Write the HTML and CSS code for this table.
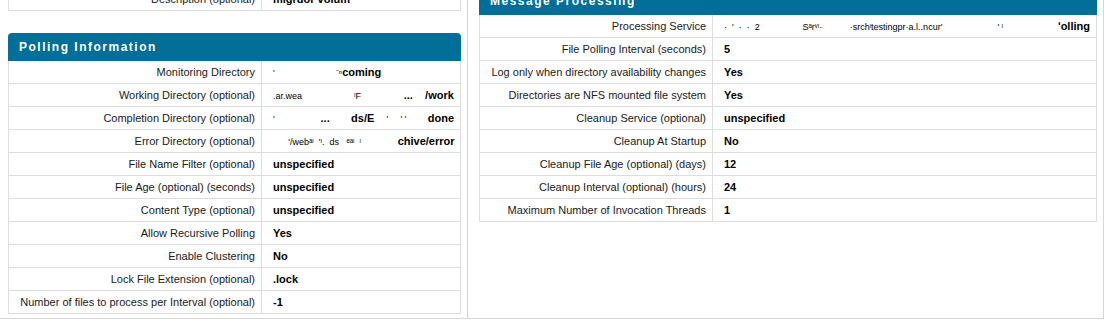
FILE: index.html
```html
<!DOCTYPE html>
<html lang="en">
<head>
<meta charset="UTF-8">
<meta name="viewport" content="width=device-width, initial-scale=1.0">
<title>File Polling Listener</title>
<link rel="stylesheet" href="styles.css">
</head>
<body>
    <div class="page">
        <div class="col col-left">
            <table class="props">
                <tr><td class="label">Description (optional)</td><td class="value">migrdor volum</td></tr>
            </table>

            <div class="section">
                <div class="section-head">Polling Information</div>
                <table class="props">
                    <tr><td class="label">Monitoring Directory</td><td class="value pre"><span class="smudge">'</span>                    <span class="smudge">⁻ⁿ</span>coming</td></tr>
                    <tr><td class="label">Working Directory (optional)</td><td class="value pre"><span class="smudge">.ar.wea</span>                 <span class="smudge">ᶦF</span>              ...    /work</td></tr>
                    <tr><td class="label">Completion Directory (optional)</td><td class="value pre"><span class="smudge">'</span>               ...       ds/E    <span class="smudge">ʹ</span>    <span class="smudge">ʹ ʹ</span>       done</td></tr>
                    <tr><td class="label">Error Directory (optional)</td><td class="value pre">     <span class="smudge">ʹ/webᵃᶦ  ʹᶦ.  ds   ᵉᵃᶦ  ᶦ</span>            chive/error</td></tr>
                    <tr><td class="label">File Name Filter (optional)</td><td class="value">unspecified</td></tr>
                    <tr><td class="label">File Age (optional) (seconds)</td><td class="value">unspecified</td></tr>
                    <tr><td class="label">Content Type (optional)</td><td class="value">unspecified</td></tr>
                    <tr><td class="label">Allow Recursive Polling</td><td class="value">Yes</td></tr>
                    <tr><td class="label">Enable Clustering</td><td class="value">No</td></tr>
                    <tr><td class="label">Lock File Extension (optional)</td><td class="value">.lock</td></tr>
                    <tr><td class="label">Number of files to process per Interval (optional)</td><td class="value">-1</td></tr>
                </table>
            </div>
        </div>

        <div class="col col-right">
            <div class="section">
                <div class="section-head">Message Processing</div>
                <table class="props">
                    <tr><td class="label">Processing Service</td><td class="value pre"><span class="smudge">·  ʹ  ·  ·  2</span>              <span class="smudge">Sᵃrᵛᶦ·</span>         <span class="smudge">·srchᶦtestingpr·a.l..ncurʹ</span>                  <span class="smudge">ʹ ᶦ</span>                  ʹolling</td></tr>
                    <tr><td class="label">File Polling Interval (seconds)</td><td class="value">5</td></tr>
                    <tr><td class="label">Log only when directory availability changes</td><td class="value">Yes</td></tr>
                    <tr><td class="label">Directories are NFS mounted file system</td><td class="value">Yes</td></tr>
                    <tr><td class="label">Cleanup Service (optional)</td><td class="value">unspecified</td></tr>
                    <tr><td class="label">Cleanup At Startup</td><td class="value">No</td></tr>
                    <tr><td class="label">Cleanup File Age (optional) (days)</td><td class="value">12</td></tr>
                    <tr><td class="label">Cleanup Interval (optional) (hours)</td><td class="value">24</td></tr>
                    <tr><td class="label">Maximum Number of Invocation Threads</td><td class="value">1</td></tr>
                </table>
            </div>
        </div>
    </div>
</body>
</html>
```

FILE: styles.css
```css
:root {
    --head-bg: #006e96;
    --cell-line: #dddddd;
    --col-line: #d6d6d6;
    --label-color: #1a1a1a;
}
body {
    margin: 0;
    background: white;
    font-family: "Liberation Sans", Arial, sans-serif;
    font-size: 11px;
}
.page {
    display: grid;
    grid-template-columns: 468px 636px;
    margin-top: -13px;
}
.col {
    box-sizing: border-box;
    height: 332px;
    border-right: 1px solid var(--col-line);
    border-bottom: 1px solid var(--col-line);
}
.col-left {
    padding: 0 6px 0 8px;
}
.col-right {
    padding: 0 6px 0 11px;
}
.col-left .section {
    margin-top: 22px;
}
.section-head {
    height: 28px;
    line-height: 28px;
    padding-left: 11px;
    background: var(--head-bg);
    color: white;
    font-size: 12px;
    font-weight: bold;
    letter-spacing: 1.5px;
    border-radius: 4px 4px 0 0;
}
.props {
    width: 100%;
    border-collapse: collapse;
    table-layout: fixed;
}
.props td {
    height: 22px;
    padding: 0;
    border: 1px solid var(--cell-line);
    vertical-align: middle;
    white-space: nowrap;
    overflow: hidden;
}
.section .props tr:first-child td {
    border-top: none;
}
.label {
    text-align: right;
    padding-right: 6px !important;
    color: var(--label-color);
}
.col-left .label {
    width: 246px;
}
.col-right .label {
    width: 226px;
}
.value {
    padding-left: 11px !important;
    font-weight: bold;
    color: black;
}
.pre {
    white-space: pre !important;
}
/* half-erased path characters */
.smudge {
    font-size: 9px;
    font-weight: normal;
}
```
